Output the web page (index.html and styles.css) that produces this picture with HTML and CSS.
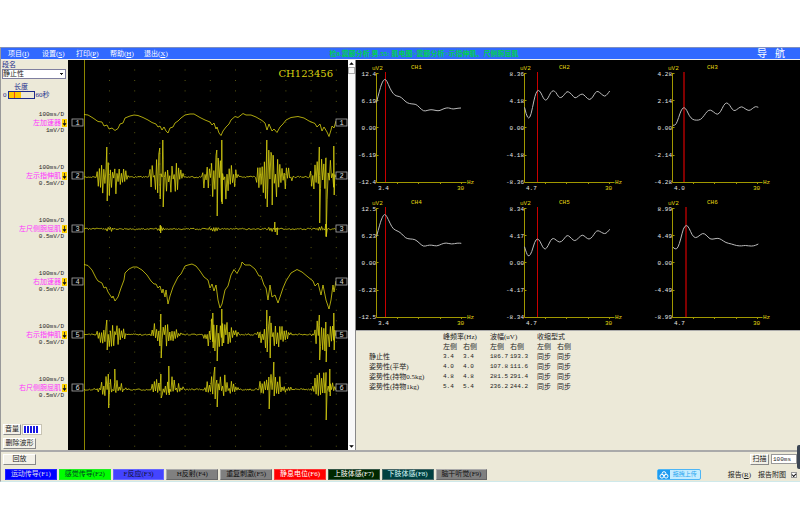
FILE: index.html
```
<!DOCTYPE html>
<html lang="zh-CN">
<head>
    <meta charset="UTF-8">
    <meta name="viewport" content="width=device-width, initial-scale=1.0">
    <title>震颤分析</title>
    <link rel="stylesheet" href="styles.css">
</head>
<body>
    <div class="app">
        <header class="menu-bar">
            <nav class="menu">
                <button>项目(<u>I</u>)</button>
                <button>设置(<u>S</u>)</button>
                <button>打印(<u>P</u>)</button>
                <button>帮助(<u>H</u>)</button>
                <button>退出(<u>X</u>)</button>
            </nav>
            <h1 class="patient">检8.震颤分析.男.55: 肌电图&gt;震颤分析&gt;示指伸肌、尺侧腕屈肌</h1>
            <button class="guide"><span>导</span><span>航</span></button>
        </header>

        <main class="workspace">
            <aside class="sidebar">
                <div class="settings">
                    <label for="segment">段名</label>
                    <select id="segment">
                        <option>静止性</option>
                        <option>姿势性(平举)</option>
                    </select>
                    <label class="length-label" for="length">长度</label>
                    <div class="length-row">
                        <span>0</span>
                        <input type="range" id="length" min="0" max="60" value="14">
                        <span>60秒</span>
                    </div>
                </div>
                <div class="channels" id="channels"></div>
                <div class="sidebar-bottom">
                    <div class="volume">
                        <button class="btn">音量</button>
                        <div class="meter"><i></i><i></i><i></i><i></i><i></i></div>
                    </div>
                    <button class="btn btn-wide">删除波形</button>
                </div>
            </aside>

            <section class="emg">
                <svg id="emg" viewBox="68 60 280 390"></svg>
            </section>

            <div class="scrollbar">
                <button aria-label="向上"><svg viewBox="0 0 6 6"><path d="M1 4h4L3 2z"/></svg></button>
                <div class="thumb"></div>
                <button class="down" aria-label="向下"><svg viewBox="0 0 6 6"><path d="M1 2h4L3 4z"/></svg></button>
            </div>

            <section class="results">
                <div class="charts" id="charts"></div>
                <table class="report">
                    <colgroup>
                        <col class="c-name"><col class="c-left"><col class="c-right"><col class="c-left"><col class="c-right"><col class="c-left"><col class="c-left">
                    </colgroup>
                    <thead>
                        <tr><th></th><th colspan="2">峰频率(Hz)</th><th colspan="2">波幅(uV)</th><th colspan="2">收缩型式</th></tr>
                        <tr><th></th><th>左侧</th><th>右侧</th><th>左侧</th><th>右侧</th><th>左侧</th><th>右侧</th></tr>
                    </thead>
                    <tbody>
                        <tr><th>静止性</th><td>3.4</td><td>3.4</td><td>186.7</td><td>193.3</td><td class="zh">同步</td><td class="zh">同步</td></tr>
                        <tr><th>姿势性(平举)</th><td>4.0</td><td>4.0</td><td>107.8</td><td>111.6</td><td class="zh">同步</td><td class="zh">同步</td></tr>
                        <tr><th>姿势性(持物0.5kg)</th><td>4.8</td><td>4.8</td><td>281.5</td><td>291.4</td><td class="zh">同步</td><td class="zh">同步</td></tr>
                        <tr><th>姿势性(持物1kg)</th><td>5.4</td><td>5.4</td><td>236.2</td><td>244.2</td><td class="zh">同步</td><td class="zh">同步</td></tr>
                    </tbody>
                </table>
            </section>
        </main>

        <footer class="bottom-bar">
            <div class="bottom-row">
                <button class="btn btn-wide">回放</button>
                <div class="sweep">
                    <button class="btn">扫描</button>
                    <input type="text" value="100ms" aria-label="扫描">
                </div>
            </div>
            <div class="bottom-row">
                <div class="modes">
                    <button class="mode blue">运动传导(F1)</button>
                    <button class="mode green">感觉传导(F2)</button>
                    <button class="mode indigo">F反应(F3)</button>
                    <button class="mode">H反射(F4)</button>
                    <button class="mode">重复刺激(F5)</button>
                    <button class="mode red">静息电位(F6)</button>
                    <button class="mode forest">上肢体感(F7)</button>
                    <button class="mode teal">下肢体感(F8)</button>
                    <button class="mode">脑干听觉(F9)</button>
                </div>
                <div class="output">
                    <button class="upload">
                        <span class="cloud">
                            <svg viewBox="0 0 12 10" fill="none" stroke="#fff"><circle cx="6" cy="3.6" r="1.9"/><circle cx="3.9" cy="6.2" r="1.9"/><circle cx="8.1" cy="6.2" r="1.9"/></svg>
                        </span>
                        <span class="upload-text">拖拽上传</span>
                    </button>
                    <button class="report-btn">报告(<u>R</u>)</button>
                    <label class="attach">报告附图<input type="checkbox" checked></label>
                </div>
            </div>
            <div class="dock"></div>
        </footer>
    </div>
    <script src="script.js"></script>
</body>
</html>
```

FILE: styles.css
```
* {
  box-sizing: border-box;
}

body {
  margin: 0;
  padding-top: 47px;
  background-color: #fff;
  color: #222;
  font-family: "Liberation Serif", "Noto Sans CJK SC", serif;
  font-size: 7px;
  line-height: 8px;
}

button, input, select {
  margin: 0;
  padding: 0;
  border: none;
  border-radius: 0;
  background: none;
  color: inherit;
  font: inherit;
  white-space: nowrap;
}

svg {
  display: block;
  width: 100%;
}

.app {
  background-color: #ece9d8;
  border-left: 1px solid #999;
  border-bottom: 1px solid #cfe9ea;
}

/* menu */
.menu-bar {
  display: flex;
  align-items: center;
  justify-content: space-between;
  height: 12px;
  padding: 0 15px 0 7px;
  background-color: #3169ff;
  border-top: 1px solid #7d8fc0;
  color: #fff;
}

.menu {
  display: flex;
  gap: 9px;
}

.menu button {
  min-width: 25px;
  text-align: left;
}

.patient {
  margin: 0;
  padding-right: 78px;
  color: #00d050;
  font-size: 7px;
  font-weight: bold;
}

.guide {
  display: flex;
  gap: 8px;
  font-size: 10px;
  line-height: 10px;
}

/* work area */
.workspace {
  display: grid;
  grid-template-columns: 67px 280px 8px 1fr;
  border-top: 1px solid #eee;
}

.sidebar {
  display: flex;
  flex-direction: column;
  padding: 1px 1px 1px 1px;
}

.settings {
  display: flex;
  flex-direction: column;
  color: #1c2c8c;
}

.settings select {
  width: 64px;
  height: 10px;
  background-color: #fff;
  border: 1px solid #7f7f9f;
  color: #222;
  appearance: none;
  background-image: linear-gradient(#222, #222), linear-gradient(#222, #222);
  background-size: 3px 1px, 1px 1px;
  background-position: right 2px top 3px, right 3px top 4px;
  background-repeat: no-repeat;
}

.length-label {
  margin-top: 4px;
  padding-left: 12px;
}

.length-row {
  display: flex;
  align-items: center;
  gap: 1px;
  padding-left: 1px;
}

.length-row input {
  width: 27px;
  height: 8px;
  appearance: none;
  border: 1px solid #1c2c8c;
  background: linear-gradient(to right, #ffc800 50%, #ece9d8 50%);
}

.length-row input::-webkit-slider-thumb {
  appearance: none;
  width: 1px;
  height: 6px;
  background-color: #f04020;
}

.channels {
  display: flex;
  flex-direction: column;
  gap: 29px;
  padding-top: 12px;
  text-align: right;
}

.channel {
  display: flex;
  flex-direction: column;
  height: 24px;
}

.scale {
  padding-right: 3px;
  font-family: "Liberation Mono", monospace;
  font-size: 6px;
}

.channel-name {
  display: flex;
  justify-content: flex-end;
  gap: 1px;
  color: #f3f;
}

.arrow {
  width: 5px;
  background-color: #ffd200;
}

.sidebar-bottom {
  display: flex;
  flex-direction: column;
  gap: 3px;
  margin-top: auto;
  padding-left: 1px;
}

.btn {
  height: 11px;
  padding: 0 1px;
  background-color: #f3f1e8;
  border: 1px solid;
  border-color: #fff #888 #888 #fff;
  line-height: 9px;
}

.btn-wide {
  width: 33px;
}

.volume {
  display: flex;
  gap: 1px;
}

.meter {
  display: flex;
  gap: 1px;
  width: 20px;
  padding: 1px;
  border: 1px solid #c8c4b4;
  background-color: #fff;
}

.meter i {
  width: 2px;
  background-color: #1818e0;
}

.emg {
  background-color: #000;
}

.emg-text {
  fill: #ddd;
  font: 7px "Liberation Mono", monospace;
  text-anchor: middle;
}

.emg-title {
  fill: #d8d010;
  font: 10px "DejaVu Serif", serif;
  text-anchor: end;
}

.scrollbar {
  display: flex;
  flex-direction: column;
  background-color: #f8f8f8;
  border-right: 1px solid #888;
}

.scrollbar button {
  height: 7px;
  background-color: #fff;
}

.scrollbar .thumb {
  height: 7px;
  border: 1px solid #aaa;
}

.scrollbar .down {
  margin-top: auto;
}

.charts {
  display: grid;
  grid-template-columns: repeat(3, 1fr);
  background-color: #000;
  border-bottom: 1px solid #aaa;
}

.value {
  fill: #e4e4e4;
  font: 6px "Liberation Mono", monospace;
}

.unit {
  fill: #e4dc10;
  font: 6px "Liberation Mono", monospace;
}

/* tremor table */
.report {
  margin: 1px 0 0 13px;
  border-collapse: collapse;
  table-layout: fixed;
  width: 208px;
}

.report th, .report td {
  height: 10px;
  padding: 0;
  font-weight: normal;
  text-align: left;
  white-space: nowrap;
}

.report td {
  font-family: "Liberation Mono", monospace;
  font-size: 6px;
}

.report .zh {
  font-family: "Liberation Serif", "Noto Sans CJK SC", serif;
  font-size: 7px;
}

.c-name { width: 74px; }
.c-left { width: 20px; }
.c-right { width: 27px; }

/* bottom bar */
.bottom-bar {
  position: relative;
  display: flex;
  flex-direction: column;
  gap: 4px;
  padding: 2px 3px 1px 2px;
  border-top: 2px solid #aaa;
}

.bottom-row {
  display: flex;
  align-items: center;
  justify-content: space-between;
}

.sweep {
  display: flex;
  gap: 2px;
}

.sweep .btn {
  width: 19px;
}

.sweep input {
  width: 26px;
  height: 10px;
  padding-left: 1px;
  background-color: #fff;
  border: 1px solid #999;
  font-family: "Liberation Mono", monospace;
  font-size: 6px;
}

.modes {
  display: grid;
  grid-template-columns: repeat(9, 1fr);
  gap: 2px;
  width: 61%;
  padding-left: 2px;
}

.mode {
  height: 11px;
  background-color: #808080;
  border: 1px solid;
  border-color: #aaa #666 #666 #aaa;
  color: #111;
  line-height: 9px;
}

.blue { background-color: #00f; border-color: #22f; color: #dde; }
.green { background-color: #0f0; border-color: #2e2; color: #042; }
.indigo { background-color: #44f; border-color: #66f; color: #113; }
.red { background-color: #f00; border-color: #f33; color: #fff; }
.forest { background-color: #002800; border-color: #354; color: #fff; }
.teal { background-color: #004040; border-color: #466; color: #dff; }

.output {
  display: flex;
  align-items: center;
}

.upload {
  display: flex;
  width: 44px;
  height: 11px;
  margin-right: 27px;
  border: 1px solid #4db5f5;
  border-radius: 2px;
  background-color: #c4ecff;
  color: #2ba6f0;
}

.cloud {
  width: 12px;
  background-color: #1e9bf0;
}

.upload-text {
  flex: 1;
  font-size: 6px;
}

.report-btn {
  margin-right: 7px;
}

.attach {
  display: flex;
  align-items: center;
  gap: 5px;
}

.attach input {
  display: flex;
  align-items: center;
  justify-content: center;
  width: 6px;
  height: 6px;
  appearance: none;
  border: 1px solid #999;
  background-color: #fff;
}

.attach input:checked::before {
  content: "";
  width: 4px;
  height: 2px;
  border: solid #111;
  border-width: 0 0 1px 1px;
  transform: rotate(-45deg);
}

/* floating handle at the window edge */
.dock {
  position: absolute;
  right: 0;
  top: -7px;
  width: 3px;
  height: 24px;
  background-color: #3c4654;
  border-radius: 2px 0 0 2px;
}
```

FILE: script.js
```
const channels = [
    { name: '左加速器', scale: '1mV/D', y: 122.5 },
    { name: '左示指伸肌', scale: '0.5mV/D', y: 175.5 },
    { name: '左尺侧腕屈肌', scale: '0.5mV/D', y: 228.5 },
    { name: '右加速器', scale: '0.5mV/D', y: 281.5 },
    { name: '右示指伸肌', scale: '0.5mV/D', y: 334.5 },
    { name: '右尺侧腕屈肌', scale: '0.5mV/D', y: 387.5 }
];

document.getElementById('channels').innerHTML = channels.map(c => `
    <div class="channel">
        <span class="scale">100ms/D</span>
        <span class="channel-name">${c.name}<svg class="arrow" viewBox="0 0 5 8"><path d="M2.5 1v4M1 4.5L2.5 6.5L4 4.5z" stroke="#222" stroke-width=".8"/></svg></span>
        <span class="scale">${c.scale}</span>
    </div>`).join('');

// accelerometer traces
const accLeft = '84,114.5 88,115 93,118 98,121.5 102,122 104,126 107,125 109,129 112,128 115,130.5 118,128.5 120,124 123,123 125,118 130,116 134,115 138,115.5 143,117.5 148,120 152,122.5 156,124 158,127 160,126 162,130 164,127 166,131 168,133 170,128 173,127 175,123 178,121 181,118 185,115 190,114 194,114 200,117.5 205,120 210,122 212,125 214,123 216,129 217,127 219,133 221,135.5 223,131 226,127 229,124 231,120 235,116.5 238,117.5 243,113.5 246,115 251,115 256,117 262,120.5 265,123 267,130 269,124 272,131 274,129 277,132.5 280,127 283,124 286,120 291,117.5 298,116.5 304,118 309,121 315,123.5 317,127 320,124 322,131 324,127 327,132 329,136.5 331,130 332,126 334,128 336,121';
const accRight = '84,264.5 88,265.5 92,270 96,278 98,281 102,283 104,288 106,287 108,292 110,295 112,298 113,296 115,301 118,297 121,288 124,280 125,273 129,269 133,267 137,267 142,270 147,275 151,281 154,284 156,284 158,288 160,286 162,293 163,289 165,297 166,290 168,304 170,296 173,287 175,283 178,277 181,274 185,266 188,265 192,264 196,266 200,271 204,277 208,280 210,288 212,284 214,291 216,285 218,300 220,308 222,304 225,290 228,286 231,275 234,269.5 237,273.5 241,266 242,262 245,265 250,265 255,269 259,276 261,276 264,285 266,288 268,300 270,285 272,297 275,295 278,303 280,297 283,288 286,281 291,273 297,269.5 302,272 308,277 313,281 315,286 318,283 321,295 323,285 326,300 329,309 331,300 333,285 334,292 336,281';

// muscle traces: bursts are [start, end, up, down], spikes are [x, top, bottom]
const muscles = [
    { base: 177, seed: 7, rest: 1.5,
      bursts: [[95, 129, 26, 21], [149, 183, 28, 26], [202, 238, 28, 29], [256, 292, 28, 27], [310, 337, 27, 29]],
      spikes: [[107, 147, 201], [160, 148, 199], [163, 140, 207], [217, 150, 216], [222, 140, 204], [267, 140, 207], [272, 156, 205], [319.5, 147, 223], [326, 158, 236], [334, 146, 195]] },
    { base: 229, seed: 3, rest: 1.5,
      bursts: [[103, 116, 2, 3], [157, 166, 3, 3], [208, 220, 3, 3], [268, 280, 4, 4], [315, 328, 3, 5]],
      spikes: [[160.5, 225, 233], [275, 222, 232], [277, 228, 235], [326, 224, 237]] },
    { base: 334.5, seed: 11, rest: 1.5,
      bursts: [[96, 128, 13, 15], [150, 181, 17, 15], [203, 238, 18, 17], [257, 291, 18, 17], [311, 337, 17, 18]],
      spikes: [[107, 320, 350], [161, 314, 358], [213, 313, 348], [217, 325, 361], [222, 309, 346], [267, 310, 352], [270, 316, 358], [319.5, 315, 360], [326, 322, 362], [334, 313, 350]] },
    { base: 389.5, seed: 19, rest: 1.5,
      bursts: [[97, 127, 14, 7], [151, 184, 16, 6], [204, 239, 17, 7], [258, 292, 20, 7], [311, 337, 20, 7]],
      spikes: [[108.5, 374, 408], [115, 369, 390], [161, 374, 398], [169, 366, 395], [215, 367, 399], [217, 380, 407], [269, 377, 409], [274, 362, 396], [326, 380, 420], [330, 369, 396]] }
];

function muscleTrace(m) {
    let seed = m.seed;
    const rnd = () => {
        seed = (seed * 16807) % 2147483647;
        return seed / 2147483647;
    };
    for (let i = 0; i < 5; i++) rnd();
    const points = [];
    let up = true;
    for (let x = 84; x < 336; x += 1.1) {
        const burst = m.bursts.find(b => x >= b[0] && x <= b[1]);
        let y = m.base + (rnd() - 0.5) * m.rest;
        if (burst) {
            const t = (x - burst[0]) / (burst[1] - burst[0]);
            const env = Math.sin(Math.PI * Math.pow(t, 0.8)) * 0.85 + 0.15;
            const r = rnd() * env;
            y = m.base + (up ? -burst[2] : burst[3]) * r;
        }
        points.push([x, y]);
        up = !up;
    }
    m.spikes.forEach(s => points.push([s[0] - 0.2, s[1]], [s[0] + 0.2, s[2]]));
    points.sort((a, b) => a[0] - b[0]);
    return points.map(p => p[0].toFixed(1) + ',' + p[1].toFixed(1)).join(' ');
}

const trace = points => `<polyline points="${points}" fill="none" stroke="#d8d010" stroke-width=".8"/>`;

let dots = '';
for (let x = 109; x < 340; x += 25.2) {
    for (let y = 70; y < 450; y += 10.45) {
        dots += `M${x.toFixed(1)} ${y.toFixed(1)}h1`;
    }
}

const channelBox = (x, y, n) => `<rect x="${x}" y="${y - 3.5}" width="11" height="7" fill="#000" stroke="#aaa" stroke-width=".8"/><text class="emg-text" x="${x + 5.5}" y="${y + 2.5}">${n}</text>`;

document.getElementById('emg').innerHTML = `
    <path d="${dots}" stroke="#585810"/>
    <path d="M84.5 60v390" stroke="#8c8600"/>
    <text class="emg-title" x="333" y="77">CH123456</text>
    ${trace(accLeft)}${trace(accRight)}${muscles.map(m => trace(muscleTrace(m))).join('')}
    ${channels.map((c, i) => channelBox(72, c.y, i + 1) + channelBox(336, c.y, i + 1)).join('')}`;

// spectrum charts
const charts = [
    { top: '12.4', mid: '6.19', peak: '3.4', x: 29.5,
      curve: [20.5,42.5, 24,28.5, 26.5,21.5, 28.7,19, 30.7,20.5, 34,28.5, 37,33.5, 40,36, 44,36.5, 47,39, 51,43, 56,44, 60,44.2, 63,47, 67.5,51.3, 71,50.5, 75,49.5, 79,50.3, 83,51, 87,49, 91,47.7, 94,48.2, 97,49.2, 101,48.3, 105,48] },
    { top: '8.36', mid: '4.18', peak: '4.7', x: 33.5,
      curve: [20.5,47.3, 22.3,55, 24.7,59, 27,55, 30,40, 32,32.7, 34.3,29.7, 37,32.7, 39.3,38.3, 41.7,40.7, 44,38.3, 46.7,32.3, 49.3,30.3, 52,32.3, 54.3,36.7, 56.7,38, 59.3,36, 62,32.3, 64,31.3, 67.7,34.3, 71,38.7, 74.3,36, 78.3,33.3, 81.7,36.7, 85.3,40.3, 88.7,37.3, 91.3,32.3, 94,31, 97.3,34, 100.7,36.7, 103.3,34.3, 105.7,31] },
    { top: '4.28', mid: '2.14', peak: '4.0', x: 32, wide: true,
      curve: [21,65.3, 23,65.7, 25.3,61.7, 28,53.3, 30,48.7, 32.3,47.3, 34.7,50, 37.3,56, 40.7,59.7, 44.7,60.3, 48.7,59.7, 52,55.7, 55.3,51, 58.3,49.7, 61.7,52, 65.3,55, 68.7,51.7, 71.7,45, 74.7,42.3, 77.7,45, 80.3,49.7, 83,51, 86.3,48.3, 89.7,46.3, 93,48.7, 97,51, 100.3,48.7, 103.3,46.3, 106.3,47.3] },
    { top: '12.5', mid: '6.23', peak: '3.4', x: 29.5,
      curve: [20.5,41.7, 24,28.3, 26.5,21.7, 28.5,19, 30.7,21, 34,28.3, 37.3,34.3, 42.3,36.3, 45.7,38.7, 49.7,43.3, 54,44, 59,44.3, 63,47.7, 67.3,51.7, 71.7,50.3, 75.7,50, 80.7,51.3, 85.7,49, 90,47.7, 95.7,49.3, 101.3,48, 105.3,48.3] },
    { top: '8.34', mid: '4.17', peak: '4.7', x: 33.5,
      curve: [20.5,51.7, 22.7,59.3, 25,61.7, 27.7,57.3, 30.7,46.7, 33.3,43.3, 36,46, 38.7,52.3, 41.3,54.7, 44,51, 46.7,45, 49.3,43, 52,45, 55.7,47.7, 59.3,45, 62,41, 64.3,40.3, 67.7,43.7, 70.7,46.3, 74.3,43.3, 78.3,39.3, 81.7,42.3, 85,44.7, 88.7,41.7, 91.3,37, 94,35.3, 97.3,37.3, 100.7,39, 103.3,37.3, 105.7,34.3] },
    { top: '8.99', mid: '4.49', peak: '4.7', x: 34, wide: true,
      curve: [21,52.3, 23.3,54.7, 26,52.7, 28.7,44.3, 31.3,33.3, 34.3,29.7, 37,32.7, 40,40, 43.3,43.3, 47,41, 50.7,38, 54,39.7, 58,44.3, 62,44, 66,43, 69.7,44.7, 73.7,47.7, 79.7,49, 84.7,50.7, 89.7,51, 93,50.3, 99.7,51.3, 103.7,50.3, 106.3,49] }
];

// run a quadratic curve through the midpoints
function smooth(c) {
    let d = `M${c[0]} ${c[1]}`;
    for (let i = 2; i < c.length - 2; i += 2) {
        d += `Q${c[i]} ${c[i + 1]} ${(c[i] + c[i + 2]) / 2} ${(c[i + 1] + c[i + 3]) / 2}`;
    }
    return d + `L${c[c.length - 2]} ${c[c.length - 1]}`;
}

document.getElementById('charts').innerHTML = charts.map((c, i) => {
    const labels = [c.top, c.mid, '0.00', '-' + c.mid, '-' + c.top];
    return `<svg viewBox="0 0 148 135">
        <path d="M${c.x} 12v110" stroke="${c.wide ? '#800000' : '#c80000'}" stroke-width="${c.wide ? 2 : 1}"/>
        <path d="M20.5 13v109.5h90M20.5 13.5h2M20.5 40.5h2M20.5 67.5h2M20.5 95.5h2M41.5 122v2M62.5 122v2M84.5 122v2M105.5 122v2" fill="none" stroke="#a09800"/>
        ${labels.map((t, n) => `<text class="value" x="20" y="${16 + n * 27}" text-anchor="end">${t}</text>`).join('')}
        <text class="unit" x="16" y="10">uV2</text>
        <text class="unit" x="55" y="9">CH${i + 1}</text>
        <text class="unit" x="111" y="124">Hz</text>
        <text class="unit" x="101" y="130">30</text>
        <text class="value" x="22" y="130">${c.peak}</text>
        <path d="${smooth(c.curve)}" fill="none" stroke="#bbb"/>
    </svg>`;
}).join('');
```
